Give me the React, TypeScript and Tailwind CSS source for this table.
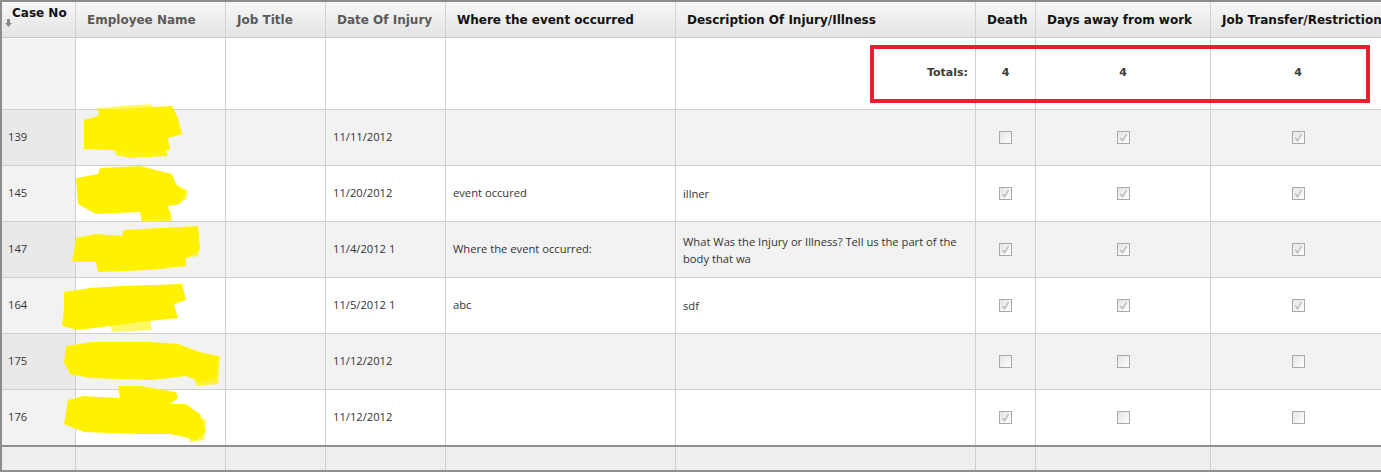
import React from 'react'

const W = ['w-[74px]', 'w-[150px]', 'w-[100px]', 'w-[120px]', 'w-[230px]', 'w-[300px]', 'w-[60px]', 'w-[175px]', 'w-[175px]']

const headers = [
  { label: 'Employee Name', muted: true },
  { label: 'Job Title', muted: true },
  { label: 'Date Of Injury', muted: true },
  { label: 'Where the event occurred', muted: false },
  { label: 'Description Of Injury/Illness', muted: false },
  { label: 'Death', muted: false },
  { label: 'Days away from work', muted: false },
  { label: 'Job Transfer/Restriction', muted: false },
]

type Row = {
  no: string
  date: string
  where: string
  desc: React.ReactNode
  death: boolean
  away: boolean
  transfer: boolean
}

const rows: Row[] = [
  { no: '139', date: '11/11/2012', where: '', desc: '', death: false, away: true, transfer: true },
  { no: '145', date: '11/20/2012', where: 'event occured', desc: 'illner', death: true, away: true, transfer: true },
  {
    no: '147',
    date: '11/4/2012 1',
    where: 'Where the event occurred:',
    desc: (
      <>
        What Was the Injury or Illness? Tell us the part of the
        <br />
        body that wa
      </>
    ),
    death: true,
    away: true,
    transfer: true,
  },
  { no: '164', date: '11/5/2012 1', where: 'abc', desc: 'sdf', death: true, away: true, transfer: true },
  { no: '175', date: '11/12/2012', where: '', desc: '', death: false, away: false, transfer: false },
  { no: '176', date: '11/12/2012', where: '', desc: '', death: true, away: false, transfer: false },
]

const Check = ({ on }: { on: boolean }) => (
  <div className="w-[13px] h-[13px] border border-[#a9a9a9] bg-linear-to-br from-[#e4e4e4] to-white flex items-center justify-center">
    {on && (
      <svg width="11" height="11" viewBox="0 0 11 11">
        <path d="M2.5 6 L4.6 8.6 L8.6 2" fill="none" stroke="#b3b3b3" strokeWidth="1.2" />
      </svg>
    )}
  </div>
)

// highlighter scribbles over the employee names
const Redactions = () => (
  <svg className="absolute left-0 top-0 pointer-events-none" width="1381" height="472" viewBox="0 0 1381 472">
    <g fill="#fff200">
      {/* 139 */}
      <polygon points="100,110 172,106 178,118 182,134 168,138 170,150 150,152 84,149 84,120 98,116" />
      <polygon points="114,146 165,148 168,156 130,158 116,155" opacity="0.9" />
      <polygon points="96,108 150,104 160,112 100,116" opacity="0.6" />
      {/* 145 */}
      <polygon points="100,168 140,166 172,174 176,184 186,192 180,204 168,206 170,218 142,220 140,212 96,214 78,204 76,178 98,174" />
      <polygon points="140,212 170,210 172,221 142,222" opacity="0.85" />
      <polygon points="176,186 188,190 186,200 178,202" opacity="0.7" />
      {/* 147 */}
      <polygon points="124,230 198,226 200,250 186,258 186,266 150,270 98,272 96,262 72,262 76,238 96,234 122,236" />
      <polygon points="184,240 200,244 198,256 186,258" opacity="0.7" />
      {/* 164 */}
      <polygon points="64,292 90,288 120,286 182,284 186,300 174,304 178,318 140,322 110,326 78,330 62,326 64,308" />
      <polygon points="110,322 150,320 152,330 112,332" opacity="0.6" />
      {/* 175 */}
      <polygon points="66,346 92,342 150,342 178,344 200,352 218,356 216,378 200,382 186,376 152,380 90,378 70,374 64,362" />
      <polygon points="190,354 220,356 218,384 196,386" opacity="0.75" />
      {/* 176 */}
      <polygon points="68,400 84,396 120,398 118,386 140,386 176,392 178,398 170,404 186,404 200,414 206,432 196,440 180,436 170,434 140,434 84,432 64,424" />
      <polygon points="186,412 206,420 204,440 190,442" opacity="0.7" />
    </g>
  </svg>
)

export default function App() {
  return (
    <div className="relative w-[1381px] h-[472px] overflow-hidden bg-white font-['Open_Sans',sans-serif] text-[11.2px] text-[#333]">
      <div className="w-[1460px] border-l-2 border-t-2 border-[#8c8c8c]">
        {/* header */}
        <div className="flex h-[36px] border-b border-[#c9c9c9] bg-linear-to-b from-[#f7f7f7] to-[#e4e4e4] font-['DejaVu_Sans',sans-serif] font-bold text-[12px]">
          <div className={`${W[0]} shrink-0 border-r border-[#d2d2d2] relative`}>
            <span className="absolute left-[10px] top-[2px] text-[#111]">Case No</span>
            <svg className="absolute left-[3px] top-[17px]" width="7" height="8" viewBox="0 0 7 8">
              <rect x="2" y="0" width="3" height="4" fill="#8a8a8a" />
              <path d="M0 4 L7 4 L3.5 8 Z" fill="#8a8a8a" />
            </svg>
          </div>
          {headers.map((h, i) => (
            <div
              key={h.label}
              className={`${W[i + 1]} shrink-0 border-r border-[#d2d2d2] flex items-center pl-[11px] whitespace-nowrap ${h.muted ? 'text-[#5a5a5a]' : 'text-[#111]'}`}
            >
              {h.label}
            </div>
          ))}
        </div>

        {/* totals */}
        <div className="flex h-[72px] border-b border-[#d0d0d0] font-['DejaVu_Sans',sans-serif] font-bold text-[11px] text-[#3a3a3a]">
          <div className={`${W[0]} shrink-0 border-r border-[#d0d0d0] bg-[#f3f3f3]`}></div>
          <div className={`${W[1]} shrink-0 border-r border-[#d0d0d0]`}></div>
          <div className={`${W[2]} shrink-0 border-r border-[#d0d0d0]`}></div>
          <div className={`${W[3]} shrink-0 border-r border-[#d0d0d0]`}></div>
          <div className={`${W[4]} shrink-0 border-r border-[#d0d0d0]`}></div>
          <div className={`${W[5]} shrink-0 border-r border-[#d0d0d0] flex items-center justify-end pr-[7px]`}>Totals:</div>
          <div className={`${W[6]} shrink-0 border-r border-[#d0d0d0] flex items-center justify-center`}>4</div>
          <div className={`${W[7]} shrink-0 border-r border-[#d0d0d0] flex items-center justify-center`}>4</div>
          <div className={`${W[8]} shrink-0 border-r border-[#d0d0d0] flex items-center justify-center`}>4</div>
        </div>

        {/* rows */}
        {rows.map((r, i) => {
          const alt = i % 2 === 0
          const last = i === rows.length - 1
          return (
            <div
              key={r.no}
              className={`flex ${last ? 'h-[55px]' : 'h-[56px] border-b border-[#d0d0d0]'} ${alt ? 'bg-[#f2f2f2]' : 'bg-white'}`}
            >
              <div className={`${W[0]} shrink-0 border-r border-[#d0d0d0] flex items-center pl-[6px] ${alt ? 'bg-[#e9e9e9]' : 'bg-[#f2f2f2]'}`}>{r.no}</div>
              <div className={`${W[1]} shrink-0 border-r border-[#d0d0d0]`}></div>
              <div className={`${W[2]} shrink-0 border-r border-[#d0d0d0]`}></div>
              <div className={`${W[3]} shrink-0 border-r border-[#d0d0d0] flex items-center pl-[7px]`}>{r.date}</div>
              <div className={`${W[4]} shrink-0 border-r border-[#d0d0d0] flex items-center pl-[7px]`}>{r.where}</div>
              <div className={`${W[5]} shrink-0 border-r border-[#d0d0d0] flex items-center pl-[7px] leading-[17px]`}>
                <div>{r.desc}</div>
              </div>
              <div className={`${W[6]} shrink-0 border-r border-[#d0d0d0] flex items-center justify-center`}>
                <Check on={r.death} />
              </div>
              <div className={`${W[7]} shrink-0 border-r border-[#d0d0d0] flex items-center justify-center`}>
                <Check on={r.away} />
              </div>
              <div className={`${W[8]} shrink-0 border-r border-[#d0d0d0] flex items-center justify-center`}>
                <Check on={r.transfer} />
              </div>
            </div>
          )
        })}

        {/* footer */}
        <div className="flex h-[27px] border-t-2 border-b-2 border-[#8f8f8f] bg-[#eeeeee]">
          {W.map((w, i) => (
            <div key={i} className={`${w} shrink-0 border-r border-[#d0d0d0]`}></div>
          ))}
        </div>
      </div>

      <Redactions />

      {/* highlight box */}
      <div className="absolute left-[870px] top-[45px] w-[500px] h-[58px] border-4 border-[#e8202b]"></div>
    </div>
  )
}
